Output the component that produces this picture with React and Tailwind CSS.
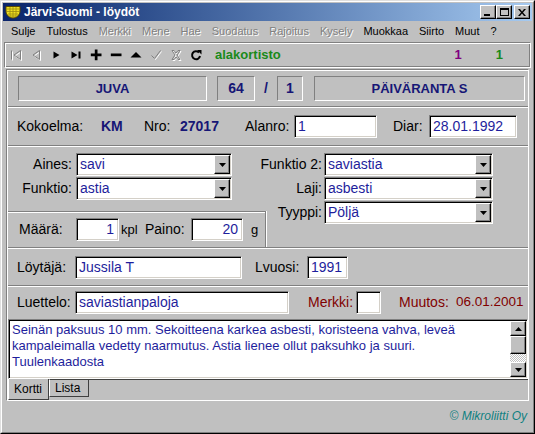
import React from 'react';

const gray = '#808080';

// sunken 2px field, like a classic windows edit box
const Field = ({ className = '', children, right }) => (
  <div
    className={`h-[23px] shrink-0 bg-white border border-t-[#808080] border-l-[#808080] border-r-white border-b-white shadow-[inset_1px_1px_0_#000,inset_-1px_-1px_0_#d4d0c8] flex items-center text-[14px] text-[#1e1e9c] ${right ? 'justify-end pr-[4px]' : 'pl-[3px]'} ${className}`}
  >
    {children}
  </div>
);

const Raised = ({ className = '', children }) => (
  <div
    className={`bg-[#c0c0c0] border border-t-white border-l-white border-r-black border-b-black shadow-[inset_-1px_-1px_0_#808080] flex items-center justify-center ${className}`}
  >
    {children}
  </div>
);

const Combo = ({ className = '', value }) => (
  <div
    className={`h-[23px] shrink-0 bg-white border border-t-[#808080] border-l-[#808080] border-r-white border-b-white shadow-[inset_1px_1px_0_#000,inset_-1px_-1px_0_#d4d0c8] flex items-stretch p-[1px] ${className}`}
  >
    <div className="flex-1 flex items-center pl-[2px] text-[14px] text-[#1e1e9c]">{value}</div>
    <Raised className="w-[16px]">
      <svg width="7" height="4" viewBox="0 0 7 4">
        <path d="M0 0h7L3.5 4z" fill="#000" />
      </svg>
    </Raised>
  </div>
);

const Sep = () => <div className="h-0 border-t border-t-[#808080] border-b border-b-white" />;

const HeadBox = ({ className = '', children }) => (
  <div
    className={`h-[25px] shrink-0 border border-t-[#808080] border-l-[#808080] border-r-white border-b-white flex items-center justify-center text-[13px] font-bold text-[#161676] ${className}`}
  >
    {children}
  </div>
);

// disabled toolbar icon: white copy offset, grey on top
const Emboss = ({ d }) => (
  <svg width="12" height="12" viewBox="0 0 12 12" className="overflow-visible">
    <path d={d} transform="translate(1 1)" fill="none" stroke="#fff" strokeWidth="1" />
    <path d={d} fill="none" stroke={gray} strokeWidth="1" />
  </svg>
);

const ToolIcon = ({ children }) => <div className="w-[20px] h-full flex items-center justify-center">{children}</div>;

function Toolbar() {
  return (
    <div className="h-[26px] mx-px mt-px flex items-center border border-t-[#808080] border-l-[#808080] border-r-white border-b-white shadow-[inset_1px_1px_0_#fff,inset_-1px_-1px_0_#808080] pl-[1px]">
      <ToolIcon>
        <Emboss d="M1.5 1.5v9M10.5 1.5L4 6l6.5 4.5z" />
      </ToolIcon>
      <ToolIcon>
        <Emboss d="M9.5 1.5L3 6l6.5 4.5z" />
      </ToolIcon>
      <ToolIcon>
        <svg width="12" height="12" viewBox="0 0 12 12"><path d="M3.5 2.5l6 3.5-6 3.5z" fill="#000" /></svg>
      </ToolIcon>
      <ToolIcon>
        <svg width="12" height="12" viewBox="0 0 12 12"><path d="M1.5 2.5l6 3.5-6 3.5z M8.5 2.5h2v7h-2z" fill="#000" /></svg>
      </ToolIcon>
      <ToolIcon>
        <svg width="12" height="12" viewBox="0 0 12 12"><path d="M4.8 0.5h2.7v4H11.5v2.7H7.5v4H4.8v-4H0.8V4.5h4z" fill="#000" /></svg>
      </ToolIcon>
      <ToolIcon>
        <svg width="12" height="12" viewBox="0 0 12 12"><path d="M0.8 4.5h10.7v2.7H0.8z" fill="#000" /></svg>
      </ToolIcon>
      <ToolIcon>
        <svg width="12" height="12" viewBox="0 0 12 12"><path d="M0.5 8.5L6 3l5.5 5.5z" fill="#000" /></svg>
      </ToolIcon>
      <ToolIcon>
        <Emboss d="M1.5 6.5l3 3 6-8" />
      </ToolIcon>
      <ToolIcon>
        <Emboss d="M2 1.5h2L6 4l2-2.5h2L7 6l3 4.5H8L6 8l-2 2.5H2L5 6z" />
      </ToolIcon>
      <ToolIcon>
        <svg width="12" height="12" viewBox="0 0 12 12">
          <path d="M9 3.5A4 4 0 1 0 10 7" fill="none" stroke="#000" strokeWidth="2" />
          <path d="M7 1h4.5v4.5z" fill="#000" />
        </svg>
      </ToolIcon>
      <span className="ml-[9px] text-[13px] font-bold text-[#1a8a1a]">alakortisto</span>
      <span className="ml-auto text-[13px] font-bold text-[#800080]">1</span>
      <span className="ml-[34px] mr-[27px] text-[13px] font-bold text-[#1a8a1a]">1</span>
    </div>
  );
}

const menu = [
  ['Sulje', true],
  ['Tulostus', true],
  ['Merkki', false],
  ['Mene', false],
  ['Hae', false],
  ['Suodatus', false],
  ['Rajoitus', false],
  ['Kysely', false],
  ['Muokkaa', true],
  ['Siirto', true],
  ['Muut', true],
  ['?', true],
];

export default function App() {
  return (
    <div className="w-[535px] h-[434px] bg-[#c0c0c0] font-['Liberation_Sans',Arial,sans-serif] text-black border border-t-[#dfdfdf] border-l-[#dfdfdf] border-r-black border-b-black">
      <div className="h-full border border-t-white border-l-white border-r-[#808080] border-b-[#808080] p-px flex flex-col">
        {/* Title bar */}
        <div className="h-[18px] bg-linear-to-r from-[#0a246a] to-[#a6caf0] flex items-center pl-[2px] pr-[2px]">
          <svg width="16" height="14" viewBox="0 0 16 14">
            <path d="M1 1.5h14V6c0 4-3.5 7-7 7S1 10 1 6z" fill="#f0e020" stroke="#5a4a00" strokeWidth="1" />
            <path d="M2 4h12M2 6.5h12M3 9h10M5 11h6M5 2v10M8 2v11M11 2v10" stroke="#9a8a10" strokeWidth="0.8" />
          </svg>
          <span className="ml-[3px] text-[12px] font-bold text-white">Järvi-Suomi - löydöt</span>
          <div className="ml-auto flex items-center">
            <Raised className="w-[16px] h-[14px]">
              <div className="w-[6px] h-[2px] bg-black mt-[6px] mr-[2px]" />
            </Raised>
            <Raised className="w-[16px] h-[14px]">
              <div className="w-[9px] h-[8px] border border-black border-t-2" />
            </Raised>
            <Raised className="ml-[2px] w-[16px] h-[14px]">
              <svg width="8" height="7" viewBox="0 0 8 7">
                <path d="M0 0h2l2 2.5L6 0h2L5 3.5 8 7H6L4 4.5 2 7H0l3-3.5z" fill="#000" />
              </svg>
            </Raised>
          </div>
        </div>

        {/* Menu bar */}
        <div className="h-[20px] flex items-center gap-[11px] pl-[8px] text-[11px]">
          {menu.map(([label, on]) => (
            <span key={label} className={on ? 'text-black' : 'text-[#808080] [text-shadow:1px_1px_0_#fff]'}>
              {label}
            </span>
          ))}
        </div>

        <Toolbar />

        {/* Main panel */}
        <div className="mt-[1px] mx-[3px] h-[332px] border border-t-[#808080] border-l-[#808080] border-r-white border-b-white shadow-[inset_1px_1px_0_#fff] flex flex-col pl-px pt-px text-[14px]">
          <div className="h-[35px] flex items-center pl-[10px]">
            <HeadBox className="w-[189px]">JUVA</HeadBox>
            <HeadBox className="ml-[10px] w-[38px] text-[14px]">64</HeadBox>
            <div className="w-[22px] text-center text-[14px] font-bold text-[#161676]">/</div>
            <HeadBox className="w-[26px] text-[14px]">1</HeadBox>
            <HeadBox className="ml-[11px] w-[211px]">PÄIVÄRANTA S</HeadBox>
          </div>
          <Sep />

          <div className="h-[37px] flex items-center pl-[9px]">
            <span className="w-[84px]">Kokoelma:</span>
            <span className="w-[43px] font-bold text-[#161676]">KM</span>
            <span className="w-[36px]">Nro:</span>
            <span className="w-[65px] font-bold text-[#161676]">27017</span>
            <span className="w-[49px]">Alanro:</span>
            <Field className="w-[83px]">1</Field>
            <span className="ml-[16px] w-[36px]">Diar:</span>
            <Field className="w-[88px]">28.01.1992</Field>
          </div>
          <Sep />

          <div className="h-[100px] flex">
            <div className="w-[250px] shrink-0 flex flex-col">
              <div className="h-[64px] pt-[6px] flex flex-col gap-px">
                <div className="flex items-center">
                  <span className="w-[64px] text-right">Aines:</span>
                  <Combo className="ml-[4px] w-[156px]" value="savi" />
                </div>
                <div className="flex items-center">
                  <span className="w-[64px] text-right">Funktio:</span>
                  <Combo className="ml-[4px] w-[156px]" value="astia" />
                </div>
              </div>
              <div className="w-[258px] h-[36px] shrink-0 border-t border-t-[#808080] border-r border-r-[#808080] shadow-[inset_0_1px_0_#fff,1px_0_0_#fff] flex items-center pl-[11px]">
                <span className="w-[57px]">Määrä:</span>
                <Field right className="w-[43px]">1</Field>
                <span className="ml-[2px] w-[24px] text-[13px]">kpl</span>
                <span className="w-[46px]">Paino:</span>
                <Field right className="w-[52px]">20</Field>
                <span className="ml-[8px] text-[13px]">g</span>
              </div>
            </div>
            <div className="flex-1 pt-[6px] flex flex-col gap-px">
              {[
                ['Funktio 2:', 'saviastia'],
                ['Laji:', 'asbesti'],
                ['Tyyppi:', 'Pöljä'],
              ].map(([l, v]) => (
                <div key={l} className="flex items-center">
                  <span className="w-[64px] text-right whitespace-nowrap">{l}</span>
                  <Combo className="ml-[2px] w-[169px]" value={v} />
                </div>
              ))}
            </div>
          </div>
          <Sep />

          <div className="h-[36px] flex items-center pl-[9px]">
            <span className="w-[58px]">Löytäjä:</span>
            <Field className="w-[167px]">Jussila T</Field>
            <span className="ml-[13px] w-[52px]">Lvuosi:</span>
            <Field className="w-[41px]">1991</Field>
          </div>
          <Sep />

          <div className="h-[31px] flex items-center pl-[9px]">
            <span className="w-[58px]">Luettelo:</span>
            <Field className="w-[214px]">saviastianpaloja</Field>
            <span className="ml-[19px] w-[48px] text-[#800000]">Merkki:</span>
            <Field className="w-[25px]" />
            <span className="ml-[18px] w-[57px] text-[#800000]">Muutos:</span>
            <span className="text-[13.5px] text-[#800000]">06.01.2001</span>
          </div>

          {/* Notes */}
          <div className="mt-px h-[60px] bg-white border border-t-[#808080] border-l-[#808080] border-r-white border-b-white shadow-[inset_1px_1px_0_#000,inset_-1px_-1px_0_#d4d0c8] flex p-[1px]">
            <div className="flex-1 pl-[2px] pt-[1px] text-[13px] leading-[16px] text-[#1e1e9c]">
              Seinän paksuus 10 mm. Sekoitteena karkea asbesti, koristeena vahva, leveä kampaleimalla vedetty naarmutus. Astia lienee ollut paksuhko ja suuri. Tuulenkaadosta
            </div>
            <div className="w-[16px] flex flex-col">
              <Raised className="h-[15px]">
                <svg width="7" height="4" viewBox="0 0 7 4"><path d="M0 4h7L3.5 0z" fill="#000" /></svg>
              </Raised>
              <Raised className="h-[18px]" />
              <div className="flex-1 bg-[repeating-conic-gradient(#fff_0%_25%,#c0c0c0_0%_50%)] bg-[length:2px_2px]" />
              <Raised className="h-[15px]">
                <svg width="7" height="4" viewBox="0 0 7 4"><path d="M0 0h7L3.5 4z" fill="#000" /></svg>
              </Raised>
            </div>
          </div>

          {/* Tabs */}
          <div className="h-[21px] flex items-start text-[12px]">
            <div className="w-[41px] h-[21px] border-l border-l-white border-r border-r-[#404040] border-b border-b-[#404040] flex items-end pl-[5px] pb-[1px]">
              Kortti
            </div>
            <div className="w-[40px] h-[18px] border-t border-t-[#404040] border-l border-l-white border-r border-r-[#404040] border-b border-b-[#404040] flex items-center pl-[5px]">
              Lista
            </div>
            <div className="flex-1 h-[2px] border-t border-t-[#404040]" />
          </div>
        </div>

        {/* Status bar */}
        <div className="flex-1 flex items-center justify-end pr-[5px] text-[12px] italic text-[#108080]">
          © Mikroliitti Oy
        </div>
      </div>
    </div>
  );
}
